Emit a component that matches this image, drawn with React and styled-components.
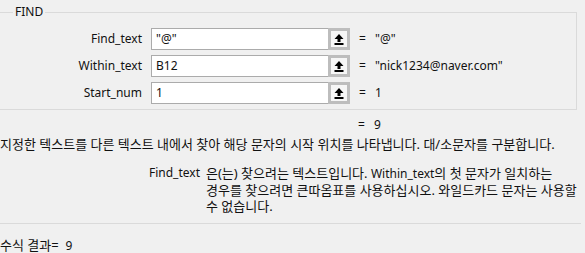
import React from 'react';
import styled, { createGlobalStyle } from 'styled-components';

const GlobalStyles = createGlobalStyle`
  body {
    margin: 0;
    background: #f0f0f0;
    font-family: 'Noto Sans', 'Noto Sans CJK KR', sans-serif;
    font-size: 12px;
    color: #111;
    overflow: hidden;
  }
`;

const Dialog = styled.div`
  width: 585px;
  height: 253px;
  overflow: hidden;
  line-height: 16px;
`;

const Group = styled.fieldset`
  margin: 4px 0 0 -10px;
  width: 587px;
  box-sizing: border-box;
  border: 1px solid #dadada;
  padding: 8px 0 5px 10px;
  display: flex;
  flex-direction: column;
  gap: 5px;
`;

const Legend = styled.legend`
  margin-left: 12px;
  padding: 0 2px;
  line-height: 16px;
`;

const ArgRow = styled.div`
  display: flex;
  align-items: center;
  height: 22px;
`;

const ArgLabel = styled.div`
  width: 141px;
  text-align: right;
  margin-right: 9px;
`;

const InputBox = styled.div`
  display: flex;
  width: 199px;
  height: 22px;
`;

const Field = styled.div`
  flex: 1;
  background: #fff;
  border: 1px solid #ababab;
  border-right: none;
  padding: 0 4px;
  display: flex;
  align-items: center;
`;

const RefButton = styled.div`
  width: 22px;
  box-sizing: border-box;
  border: 3px solid #bdbdbd;
  background: #f6f6f6;
  display: flex;
  align-items: center;
  justify-content: center;
`;

const Equals = styled.span`
  margin-left: ${(p) => (p.$flush ? 0 : 9)}px;
  width: 16px;
`;

const ResultRow = styled.div`
  display: flex;
  height: 16px;
  margin-top: 7px;
  padding-left: 358px;
`;

const Korean = styled.div`
  font-size: 13px;
  white-space: nowrap;
`;

const Description = styled(Korean)`
  margin-top: 3px;
`;

const Latin = styled.span`
  font-size: 12px;
`;

const ArgHelp = styled.div`
  display: flex;
  margin-top: 13px;
  padding-left: 149px;
`;

const HelpName = styled.div`
  width: 57px;
  flex-shrink: 0;
`;

const Divider = styled.div`
  height: 1px;
  background: #dadada;
  margin: 9px 4px 13px 0;
`;

const UpIcon = () => (
  <svg width="10" height="11" viewBox="0 0 10 11">
    <path d="M5 0 L9.5 5 L6.5 5 L6.5 8 L3.5 8 L3.5 5 L0.5 5 Z" fill="#000" />
    <rect x="0.5" y="9" width="9" height="2" fill="#000" />
  </svg>
);

const args = [
  { name: 'Find_text', input: '"@"', value: '"@"' },
  { name: 'Within_text', input: 'B12', value: '"nick1234@naver.com"' },
  { name: 'Start_num', input: '1', value: '1' },
];

const App = () => {
  return (
    <Dialog>
      <GlobalStyles />
      <Group>
        <Legend>FIND</Legend>
        {args.map((a) => (
          <ArgRow key={a.name}>
            <ArgLabel>{a.name}</ArgLabel>
            <InputBox>
              <Field>{a.input}</Field>
              <RefButton>
                <UpIcon />
              </RefButton>
            </InputBox>
            <Equals>=</Equals>
            <span>{a.value}</span>
          </ArgRow>
        ))}
      </Group>
      <ResultRow>
        <Equals $flush>=</Equals>
        <span>9</span>
      </ResultRow>
      <Description>
        지정한 텍스트를 다른 텍스트 내에서 찾아 해당 문자의 시작 위치를 나타냅니다. 대/소문자를 구분합니다.
      </Description>
      <ArgHelp>
        <HelpName>Find_text</HelpName>
        <Korean>
          은(는) 찾으려는 텍스트입니다. <Latin>Within_text</Latin>의 첫 문자가 일치하는
          <br />
          경우를 찾으려면 큰따옴표를 사용하십시오. 와일드카드 문자는 사용할
          <br />
          수 없습니다.
        </Korean>
      </ArgHelp>
      <Divider />
      <Korean>
        수식 결과=&nbsp;&nbsp;<Latin>9</Latin>
      </Korean>
    </Dialog>
  );
};

export default App;
